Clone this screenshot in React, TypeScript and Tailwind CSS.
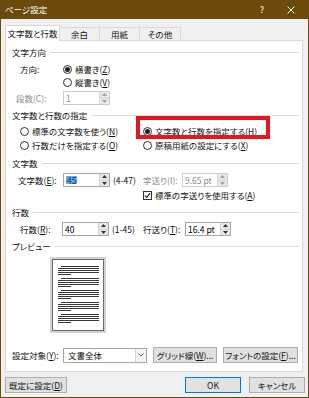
import React from "react";

const BROWN = "#6b4a0c";

// small radio button
function Radio({ checked }: { checked?: boolean }) {
  return (
    <span className="w-[9px] h-[9px] rounded-full border border-[#333333] bg-white flex items-center justify-center shrink-0">
      {checked && <span className="w-[5px] h-[5px] rounded-full bg-[#222222]" />}
    </span>
  );
}

function Check() {
  return (
    <span className="w-[9px] h-[9px] border border-[#333333] bg-white flex items-center justify-center shrink-0">
      <svg width="7" height="7" viewBox="0 0 7 7">
        <path d="M0.8 3.6 L2.7 5.4 L6.2 1.2" stroke="#222" strokeWidth="1.1" fill="none" />
      </svg>
    </span>
  );
}

function Spinner({ disabled }: { disabled?: boolean }) {
  const c = disabled ? "#a0a0a0" : "#333333";
  return (
    <div className="w-[10px] h-full flex flex-col border-l border-[#d4d4d4] bg-[#e8e8e8]">
      <div className="flex-1 flex items-center justify-center border-b border-[#d4d4d4]">
        <svg width="5" height="3" viewBox="0 0 5 3">
          <path d="M0 3 L2.5 0 L5 3 Z" fill={c} />
        </svg>
      </div>
      <div className="flex-1 flex items-center justify-center">
        <svg width="5" height="3" viewBox="0 0 5 3">
          <path d="M0 0 L2.5 3 L5 0 Z" fill={c} />
        </svg>
      </div>
    </div>
  );
}

function Field({
  value,
  width,
  disabled,
  selected,
}: {
  value: string;
  width: string;
  disabled?: boolean;
  selected?: boolean;
}) {
  return (
    <div
      className={`${width} h-[14px] flex border ${
        disabled ? "border-[#cccccc] text-[#8c8c8c]" : "border-[#a6a6a6] text-black"
      } bg-white shrink-0`}
    >
      <div className="flex-1 flex items-center pl-[2px]">
        <span className={selected ? "bg-[#67aee8] text-[#0c2f66] px-[1px]" : ""}>{value}</span>
      </div>
      <Spinner disabled={disabled} />
    </div>
  );
}

function Header({ label }: { label: string }) {
  return (
    <div className="flex items-center h-[12px] pl-[6px] pr-[3px]">
      <span>{label}</span>
      <div className="flex-1 h-px bg-[#dddddd] ml-[4px]" />
    </div>
  );
}

function Button({ children, width, primary }: { children: React.ReactNode; width: string; primary?: boolean }) {
  return (
    <div
      className={`${width} h-[16px] flex items-center justify-center whitespace-nowrap bg-[#e1e1e1] border ${
        primary ? "border-[#0078d7]" : "border-[#adadad]"
      } shrink-0`}
    >
      {children}
    </div>
  );
}

function PreviewPage() {
  const groups = [0, 1, 2, 3, 4];
  return (
    <div className="ml-[44px] mt-[5px] w-[56px] h-[76px] border-2 border-[#d2d2d2] bg-[#f4f4f4]">
      <div className="w-full h-full border border-[#6a6a6a] bg-white pt-[6px] pl-[5px] flex flex-col gap-[3px]">
        {groups.map((g) => (
          <div key={g} className="flex flex-col gap-[1px]">
            <div className="ml-[3px] w-[38px] h-px bg-[#3a3a3a]" />
            <div className="w-[41px] h-px bg-[#3a3a3a]" />
            <div className="w-[41px] h-px bg-[#3a3a3a]" />
            <div className="w-[41px] h-px bg-[#3a3a3a]" />
            <div className="w-[13px] h-px bg-[#3a3a3a]" />
          </div>
        ))}
      </div>
    </div>
  );
}

export default function App() {
  return (
    <div
      className="w-[309px] h-[398px] bg-[#f0f0f0] border-x border-b flex flex-col text-[8.5px] leading-none text-[#111111] whitespace-nowrap font-['Noto_Sans_CJK_JP',sans-serif] [font-feature-settings:'palt']"
      style={{ borderColor: BROWN }}
    >
      {/* title bar */}
      <div className="h-[19px] bg-[#6b4a0c] flex items-center text-white -mx-px px-[5px] shrink-0">
        <span>ページ設定</span>
        <div className="flex-1" />
        <span className="mr-[23px]">?</span>
        <svg width="8" height="8" viewBox="0 0 8 8" className="mr-[9px]">
          <path d="M0.5 0.5 L7.5 7.5 M7.5 0.5 L0.5 7.5" stroke="#ffffff" strokeWidth="1" />
        </svg>
      </div>

      {/* tabs */}
      <div className="h-[21px] flex items-end pl-[4px] shrink-0">
        <div className="relative z-10 -mb-px w-[55px] h-[16px] bg-white border border-b-0 border-[#d9d9d9] flex items-center justify-center">
          文字数と行数
        </div>
        <div className="w-[40px] h-[13px] border border-l-0 border-b-0 border-[#d9d9d9] flex items-center justify-center">
          余白
        </div>
        <div className="w-[40px] h-[13px] border border-l-0 border-b-0 border-[#d9d9d9] flex items-center justify-center">
          用紙
        </div>
        <div className="w-[41px] h-[13px] border border-l-0 border-b-0 border-[#d9d9d9] flex items-center justify-center">
          その他
        </div>
      </div>

      {/* panel */}
      <div className="relative ml-[4px] w-[298px] h-[332px] bg-white border border-[#d9d9d9] flex flex-col shrink-0">
        <div className="mt-[5px]">
          <Header label="文字方向" />
        </div>
        <div className="mt-[5px] h-[12px] flex items-center">
          <span className="ml-[14px] w-[43px]">方向:</span>
          <Radio checked />
          <span className="ml-[3px]">
            横書き(<u>Z</u>)
          </span>
        </div>
        <div className="mt-[1px] h-[12px] flex items-center">
          <span className="ml-[57px]" />
          <Radio />
          <span className="ml-[3px]">
            縦書き(<u>V</u>)
          </span>
        </div>
        <div className="mt-[4px] h-[12px] flex items-center">
          <span className="ml-[10px] w-[47px] text-[#8c8c8c]">段数(C):</span>
          <Field value="1" width="w-[47px]" disabled />
        </div>

        <div className="mt-[5px]">
          <Header label="文字数と行数の指定" />
        </div>
        <div className="mt-[4px] h-[12px] flex items-center">
          <div className="ml-[14px] w-[123px] flex items-center">
            <Radio />
            <span className="ml-[3px]">
              標準の文字数を使う(<u>N</u>)
            </span>
          </div>
          <Radio checked />
          <span className="ml-[3px]">
            文字数と行数を指定する(<u>H</u>)
          </span>
        </div>
        <div className="mt-[2px] h-[12px] flex items-center">
          <div className="ml-[14px] w-[123px] flex items-center">
            <Radio />
            <span className="ml-[3px]">
              行数だけを指定する(<u>O</u>)
            </span>
          </div>
          <Radio />
          <span className="ml-[3px]">
            原稿用紙の設定にする(<u>X</u>)
          </span>
        </div>

        <div className="mt-[6px]">
          <Header label="文字数" />
        </div>
        <div className="mt-[5px] h-[12px] flex items-center">
          <span className="ml-[12px] w-[45px]">
            文字数(<u>E</u>):
          </span>
          <Field value="45" width="w-[47px]" selected />
          <span className="w-[33px] pl-[3px]">(4-47)</span>
          <span className="w-[39px] text-[#8c8c8c]">字送り(I):</span>
          <Field value="9.65 pt" width="w-[46px]" disabled />
        </div>
        <div className="mt-[3px] h-[12px] flex items-center">
          <span className="ml-[137px]" />
          <Check />
          <span className="ml-[3px]">
            標準の字送りを使用する(<u>A</u>)
          </span>
        </div>

        <div className="mt-[5px]">
          <Header label="行数" />
        </div>
        <div className="mt-[5px] h-[12px] flex items-center">
          <span className="ml-[14px] w-[42px]">
            行数(<u>R</u>):
          </span>
          <Field value="40" width="w-[47px]" />
          <span className="w-[34px] pl-[3px]">(1-45)</span>
          <span className="w-[42px]">
            行送り(<u>T</u>):
          </span>
          <Field value="16.4 pt" width="w-[46px]" />
        </div>

        <div className="mt-[5px]">
          <Header label="プレビュー" />
        </div>
        <PreviewPage />

        <div className="mt-[16px] h-[12px] flex items-center">
          <span className="ml-[6px] w-[51px]">
            設定対象(<u>Y</u>):
          </span>
          <div className="w-[84px] h-[15px] border border-[#a6a6a6] bg-white flex shrink-0">
            <div className="flex-1 flex items-center pl-[4px]">文書全体</div>
            <div className="w-[11px] border-l border-[#d4d4d4] bg-[#f3f3f3] flex items-center justify-center">
              <svg width="6" height="4" viewBox="0 0 6 4">
                <path d="M0.5 0.5 L3 3 L5.5 0.5" stroke="#555" strokeWidth="0.9" fill="none" />
              </svg>
            </div>
          </div>
          <div className="ml-[6px]">
            <Button width="w-[64px]">
              グリッド線(<u>W</u>)...
            </Button>
          </div>
          <div className="ml-[6px]">
            <Button width="w-[75px]">
              フォントの設定(<u>F</u>)...
            </Button>
          </div>
        </div>

        {/* red annotation box */}
        <div className="absolute left-[130px] top-[75px] w-[134px] h-[23px] border-4 border-[#e8141f]" />
      </div>

      {/* footer buttons */}
      <div className="mt-[5px] h-[16px] flex items-center shrink-0">
        <div className="ml-[4px]">
          <Button width="w-[62px]">
            既定に設定(<u>D</u>)
          </Button>
        </div>
        <div className="flex-1" />
        <Button width="w-[56px]" primary>
          OK
        </Button>
        <div className="ml-[8px] mr-[3px]">
          <Button width="w-[56px]">キャンセル</Button>
        </div>
      </div>
    </div>
  );
}
